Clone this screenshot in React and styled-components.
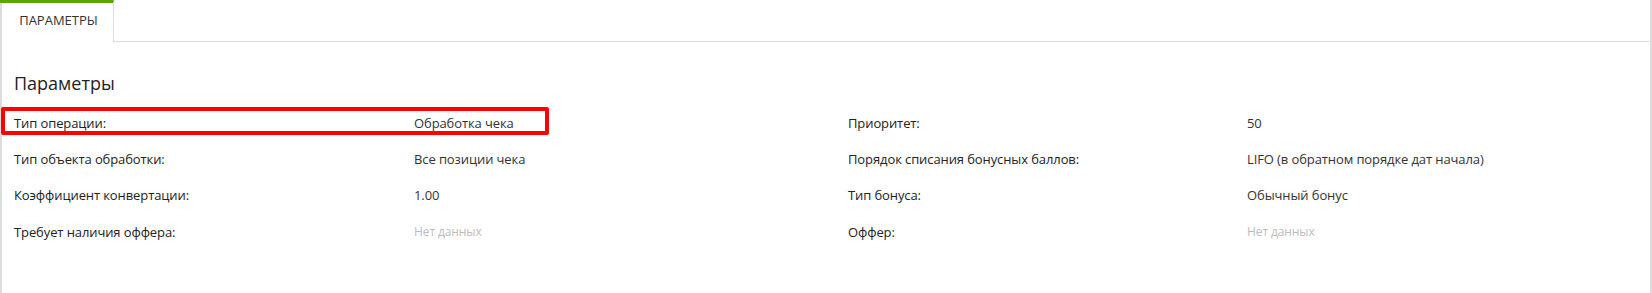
import React from "react";
import styled, { createGlobalStyle } from "styled-components";

const Global = createGlobalStyle`
  html, body { margin: 0; padding: 0; background: #fff; }
  body { font-family: "Open Sans", "Liberation Sans", sans-serif; color: #222; }
  * { box-sizing: border-box; }
`;

const Panel = styled.div`
  position: relative;
  width: 1652px;
  height: 293px;
  border-left: 2px solid #dcdcdc;
  border-right: 2px solid #dcdcdc;
  display: flex;
  flex-direction: column;
`;

const TabBar = styled.div`
  display: flex;
  height: 42px;
`;

const Tab = styled.div`
  width: 114px;
  margin-left: -2px;
  border-top: 3px solid #58a700;
  border-right: 1px solid #dcdcdc;
  display: flex;
  align-items: center;
  justify-content: center;
  padding-left: 4px;
  padding-bottom: 5px;
  font-size: 13px;
  color: #333;
`;

const TabFill = styled.div`
  flex: 1;
  border-bottom: 1px solid #dcdcdc;
`;

const Body = styled.div`
  padding: 29px 12px 0 12px;
`;

const Heading = styled.h2`
  margin: 0 0 12px 0;
  font-size: 18px;
  font-weight: 400;
  line-height: 24px;
  color: #222;
`;

const Grid = styled.div`
  display: grid;
  grid-template-columns: 400px 434px 399px 1fr;
  grid-auto-rows: 36.2px;
  font-size: 13px;
  line-height: 20px;
  letter-spacing: -0.1px;
`;

const Cell = styled.div`
  padding-top: 6px;
  color: ${(p) => (p.$empty ? "#bcbcbc" : p.$value ? "#333" : "#222")};
  font-size: ${(p) => (p.$empty ? "12px" : "13px")};
  white-space: nowrap;
`;

const Highlight = styled.div`
  position: absolute;
  left: -1px;
  top: 107px;
  width: 548px;
  height: 28px;
  border: 4px solid #ff0000;
  border-radius: 2px;
  pointer-events: none;
`;

const rows = [
  ["Тип операции:", "Обработка чека", "Приоритет:", "50"],
  ["Тип объекта обработки:", "Все позиции чека", "Порядок списания бонусных баллов:", "LIFO (в обратном порядке дат начала)"],
  ["Коэффициент конвертации:", "1.00", "Тип бонуса:", "Обычный бонус"],
  ["Требует наличия оффера:", null, "Оффер:", null],
];

export default function App() {
  return (
    <>
      <Global />
      <Panel>
        <TabBar>
          <Tab>ПАРАМЕТРЫ</Tab>
          <TabFill />
        </TabBar>
        <Body>
          <Heading>Параметры</Heading>
          <Grid>
            {rows.map((r, i) => (
              <React.Fragment key={i}>
                <Cell>{r[0]}</Cell>
                <Cell $value $empty={r[1] === null}>{r[1] ?? "Нет данных"}</Cell>
                <Cell>{r[2]}</Cell>
                <Cell $value $empty={r[3] === null}>{r[3] ?? "Нет данных"}</Cell>
              </React.Fragment>
            ))}
          </Grid>
        </Body>
        <Highlight />
      </Panel>
    </>
  );
}
